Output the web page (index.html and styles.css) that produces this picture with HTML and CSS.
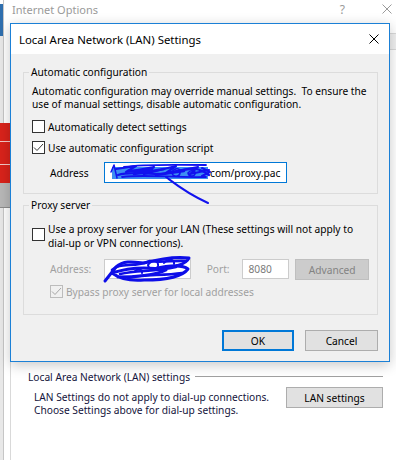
FILE: index.html
```html
<!DOCTYPE html>
<html>
<head>
<meta charset="utf-8">
<link rel="stylesheet" href="styles.css">
</head>
<body>
<div class="screen">
  <div class="desk">
    <div class="desk-blue"></div>
    <div class="desk-light"></div>
  </div>
  <div class="io">
    <div class="io-title">
      <span class="io-name">Internet Options</span>
      <span class="io-help">?</span>
      <svg class="io-close" width="10" height="10" viewBox="0 0 10 10"><path d="M0.5 0.5L9.5 9.5M9.5 0.5L0.5 9.5" stroke="#9a9a9a" stroke-width="1" fill="none"/></svg>
    </div>
    <div class="io-body">
      <div class="tabs"><div class="tab"></div></div>
      <div class="tabpage">
        <div class="lan-head"><span>Local Area Network (LAN) settings</span><div class="etched"></div></div>
        <div class="lan-row">
          <p class="lan-note">LAN Settings do not apply to dial-up connections.<br>Choose Settings above for dial-up settings.</p>
          <button class="btn lan-btn">LAN settings</button>
        </div>
      </div>
    </div>
  </div>

  <div class="side-window">
    <div class="sw-red"></div>
    <div class="sw-stripe"></div>
    <div class="sw-red short"></div>
    <div class="sw-stripe"></div>
    <div class="sw-red"></div>
    <div class="sw-gray"></div>
  </div>

  <div class="dialog">
    <div class="dlg-title">
      <span>Local Area Network (LAN) Settings</span>
      <svg class="dlg-close" width="10" height="10" viewBox="0 0 10 10"><path d="M0.5 0.5L9.5 9.5M9.5 0.5L0.5 9.5" stroke="#000" stroke-width="1" fill="none"/></svg>
    </div>
    <div class="dlg-body">
      <fieldset class="group">
        <legend>Automatic configuration</legend>
        <div class="group-in auto">
          <p class="desc">Automatic configuration may override manual settings.&nbsp; To ensure the<br>use of manual settings, disable automatic configuration.</p>
          <div class="cb-row first">
            <span class="cb"></span><span class="cb-label">Automatically detect settings</span>
          </div>
          <div class="cb-row second">
            <span class="cb"><svg width="11" height="11" viewBox="0 0 11 11"><path d="M1 5.5L4 8.5L10 2" stroke="#3a3a3a" stroke-width="1" fill="none"/></svg></span><span class="cb-label">Use automatic configuration script</span>
          </div>
          <div class="addr-row">
            <span class="addr-label">Address</span>
            <div class="field focus">
              <span class="sel"></span><span class="url">com/proxy.pac</span>
              <svg class="scribble s1" width="110" height="45" viewBox="0 0 110 45">
                <g stroke="#1212ee" fill="none" stroke-linejoin="round" stroke-linecap="round">
                  <path d="M7 10L10 3L13 16" stroke-width="1.5"/>
                  <path d="M12 7L32 4L22 10L50 5L40 12L72 4L62 11L94 5L86 12L105 8" stroke-width="2.2"/>
                  <path d="M14 13C30 8 50 15 70 10S95 6 105 13" stroke-width="2.2"/>
                  <path d="M20 5C40 2 62 3 102 3M18 15C40 12 70 16 102 15" stroke-width="1.8"/>
                  <path d="M24 9L48 8M52 13L80 9M30 12L60 7" stroke-width="2.5"/>
                  <path d="M68 10c3 -5 9 -4 8 1c-1 5 -8 4 -8 -1M84 11c3 -4 8 -3 7 1c-1 3 -6 3 -7 -1" stroke-width="1.6"/>
                  <path d="M98 6L106 10L98 14" stroke-width="2"/>
                  <path d="M62 15C70 21 82 31 104 41" stroke-width="2"/>
                </g>
              </svg>
            </div>
          </div>
        </div>
      </fieldset>

      <fieldset class="group proxy">
        <legend>Proxy server</legend>
        <div class="group-in prox">
          <div class="cb-row multi">
            <span class="cb"></span><span class="cb-label">Use a proxy server for your LAN (These settings will not apply to<br>dial-up or VPN connections).</span>
          </div>
          <div class="proxy-row">
            <span class="addr-label dim">Address:</span>
            <div class="field dis addr2">
              <svg class="scribble s2" width="90" height="28" viewBox="0 -5 90 28">
                <g stroke="#0e0ee8" fill="none" stroke-linejoin="round" stroke-linecap="round">
                  <path d="M1 21L12 7C20 0 30 2 40 3C55 -1 70 -4 85 -2C82 5 70 7 50 9C62 6 78 4 84 9C78 17 60 20 40 20C28 21 16 19 8 13C20 9 40 6 62 10C52 15 30 17 14 17" stroke-width="3"/>
                  <path d="M8 10C16 2 30 8 46 1C58 3 70 0 82 1M16 14C34 10 50 12 72 7M24 18C40 14 58 16 78 13" stroke-width="2.6"/>
                  <path d="M44 5c4 -6 11 -5 10 1c-1 5 -9 5 -10 -1M60 3c4 -5 11 -4 10 1M30 12c3 -4 9 -3 8 1" stroke-width="2"/>
                </g>
              </svg>
            </div>
            <span class="port-label dim">Port:</span>
            <div class="field dis port">8080</div>
            <button class="btn disabled adv">Advanced</button>
          </div>
          <div class="cb-row bypass">
            <span class="cb dis"><svg width="11" height="11" viewBox="0 0 11 11"><path d="M1 5.5L4 8.5L10 2" stroke="#a6a6a6" stroke-width="1" fill="none"/></svg></span><span class="cb-label dim">Bypass proxy server for local addresses</span>
          </div>
        </div>
      </fieldset>

      <div class="actions">
        <button class="btn default">OK</button>
        <button class="btn">Cancel</button>
      </div>
    </div>
  </div>
</div>
</body>
</html>
```

FILE: styles.css
```css
html, body {
  margin: 0;
  padding: 0;
  background: #ffffff;
}
body {
  font-family: "Noto Sans", "Open Sans", sans-serif;
  font-size: 10.2px;
  color: #000;
}
.screen {
  position: relative;
  display: flex;
  width: 396px;
  height: 460px;
  overflow: hidden;
}
.desk {
  width: 3px;
  flex: none;
  display: flex;
  flex-direction: column;
}
.desk-blue { height: 32px; background: #2f6fae; margin-top: 4px; }
.desk-light { flex: 1; background: #e8e8e8; }

.side-window {
  position: absolute;
  left: 0;
  top: 123px;
  width: 10px;
  display: flex;
  flex-direction: column;
}
.sw-red { height: 18px; background: #d9231b; }
.sw-red.short { height: 22px; }
.sw-stripe { height: 1px; background: #f3c9c6; }
.sw-gray { height: 24px; background: #b8b8b8; border-bottom: 1px solid #8c8c8c; }

.io {
  flex: 1;
  border-left: 1px solid #c6c6c6;
  background: #fff;
  display: flex;
  flex-direction: column;
}
.io-title {
  height: 18px;
  display: flex;
  align-items: center;
  padding: 0 4px 0 8px;
}
.io-name {
  font-size: 11px;
  color: #9a9a9a;
}
.io-help {
  margin-left: auto;
  font-size: 12px;
  color: #9a9a9a;
}
.io-close {
  margin-left: 37px;
}
.io-body {
  flex: 1;
  padding: 15px 0 0 6px;
  display: flex;
  flex-direction: column;
}
.tabs {
  height: 17px;
  display: flex;
  justify-content: flex-end;
}
.tab {
  width: 7px;
  box-sizing: border-box;
  border: 1px solid #d9d9d9;
  border-right: none;
  background: #f0f0f0;
}
.tabpage {
  flex: 1;
  border-left: 1px solid #d9d9d9;
  padding: 319px 0 0 17px;
}
.lan-head {
  width: 355px;
  height: 15px;
  display: flex;
  align-items: center;
  color: #14143c;
}
.etched {
  flex: 1;
  height: 1px;
  background: #a0a0a0;
  margin-left: 5px;
}
.lan-row {
  width: 355px;
  margin-top: 3px;
  display: flex;
  justify-content: space-between;
  align-items: flex-start;
}
.lan-note {
  margin: 4px 0 0 6px;
  line-height: 13px;
  color: #14143c;
}
.lan-btn {
  width: 97px;
}

.btn {
  font-family: inherit;
  font-size: inherit;
  box-sizing: border-box;
  height: 21px;
  background: #e1e1e1;
  border: 1px solid #adadad;
  color: #000;
  padding: 0;
  border-radius: 0;
}
.btn.default {
  border: 2px solid #0078d7;
}
.btn.disabled {
  background: #cccccc;
  border-color: #bfbfbf;
  color: #838383;
}

.dialog {
  position: absolute;
  left: 10px;
  top: 23px;
  width: 380px;
  height: 339px;
  box-sizing: border-box;
  border: 1px solid #1b80d6;
  background: #f0f0f0;
  box-shadow: 0 3px 12px rgba(0, 0, 0, 0.22);
  display: flex;
  flex-direction: column;
}
.dlg-title {
  height: 30px;
  flex: none;
  background: #fff;
  display: flex;
  align-items: center;
  justify-content: space-between;
  padding: 0 10px 0 8px;
  font-size: 11.4px;
}
.dlg-body {
  padding: 11px 11px 0 12px;
}
.group {
  margin: 0;
  padding: 0;
  min-width: 0;
  border: 1px solid #dcdcdc;
}
.group legend {
  margin-left: 5px;
  padding: 0 2px;
  line-height: 15px;
}
.group.proxy {
  margin-top: 4px;
}
.group-in {
  padding: 0 8px;
}
.group-in.auto {
  padding-top: 5px;
  padding-bottom: 10px;
}
.group-in.prox {
  padding-top: 9px;
  padding-bottom: 14px;
}
.desc {
  margin: 0;
  line-height: 13px;
}
.cb-row {
  display: flex;
  align-items: center;
  height: 17px;
}
.cb-row.first { margin-top: 7px; }
.cb-row.second { margin-top: 4px; }
.cb-row.multi {
  height: auto;
  align-items: flex-start;
  line-height: 14px;
}
.cb-row.multi .cb { margin-top: 6px; }
.cb-row.bypass {
  margin-top: 3px;
  padding-left: 18px;
}
.cb {
  width: 13px;
  height: 13px;
  box-sizing: border-box;
  border: 1px solid #333;
  background: #fff;
  flex: none;
  display: flex;
}
.cb.dis {
  border-color: #bcbcbc;
  background: #f0f0f0;
}
.cb-label {
  margin-left: 3px;
}
.dim {
  color: #a0a0a0;
}
.addr-row {
  margin-top: 6px;
  display: flex;
  align-items: center;
}
.addr-label {
  width: 54px;
  margin-left: 18px;
  flex: none;
}
.field {
  position: relative;
  box-sizing: border-box;
  background: #fff;
  display: flex;
  align-items: center;
}
.field.focus {
  width: 183px;
  height: 21px;
  border: 1px solid #0078d7;
  padding-left: 7px;
}
.sel {
  width: 96px;
  height: 12px;
  background: #3d8ff2;
}
.url {
  margin-left: 2px;
}
.scribble {
  position: absolute;
  left: -1px;
  overflow: visible;
}
.s1 { top: -1px; }
.s2 { top: -5px; }
.proxy-row {
  margin-top: 9px;
  display: flex;
  align-items: flex-start;
}
.proxy-row .addr-label {
  line-height: 20px;
}
.field.dis {
  height: 20px;
  border: 1px solid #cccccc;
}
.addr2 {
  width: 87px;
}
.port-label {
  width: 36px;
  margin-left: 16px;
  line-height: 20px;
}
.port {
  width: 47px;
  padding-left: 5px;
  color: #7a7a7a;
}
.adv {
  width: 74px;
  margin-left: 6px;
}
.actions {
  margin-top: 15px;
  display: flex;
  justify-content: flex-end;
  gap: 11px;
}
.actions .btn {
  width: 73px;
}
.actions .default {
  width: 72px;
}
```
